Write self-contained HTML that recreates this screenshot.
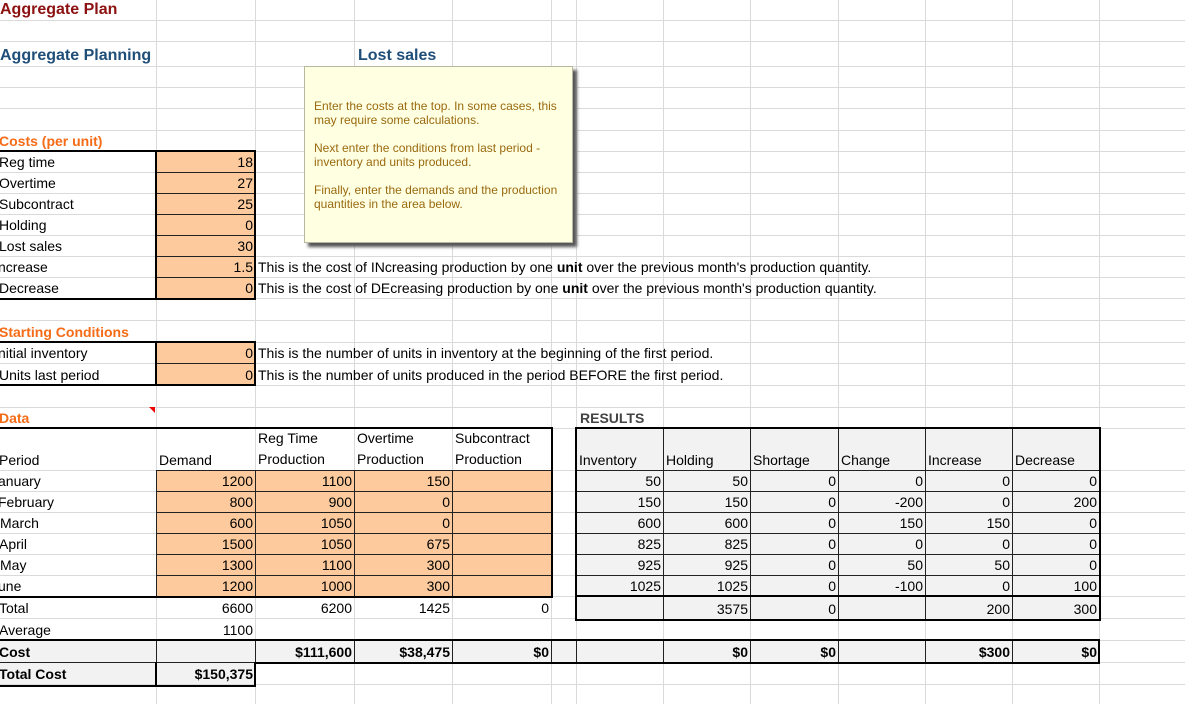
<!DOCTYPE html>
<html><head><meta charset="utf-8"><style>
*{margin:0;padding:0;box-sizing:border-box}
body{width:1185px;height:704px;overflow:hidden;background:#fff;position:relative;font-family:"Liberation Sans",Arial,sans-serif;font-size:14px;color:#000}
.v{position:absolute;top:0;width:1px;height:704px;background:#dadada}
.h{position:absolute;left:0;height:1px;width:1185px;background:#dadada}
.c{position:absolute;display:flex;align-items:flex-end;padding:0 2px 2px 2px;white-space:nowrap;line-height:16px}
.r{justify-content:flex-end}
.o{background:#fcca9c;border-top:1px solid #222;border-left:1px solid #222}
.g{background:#f2f2f2;border-top:1px solid #222;border-left:1px solid #222}
.b{font-weight:bold}
.box{position:absolute;border:2px solid #000}
.t{color:#444}
</style></head><body>
<div class="v" style="left:156px"></div><div class="v" style="left:255px"></div><div class="v" style="left:354px"></div><div class="v" style="left:452px"></div><div class="v" style="left:551px"></div><div class="v" style="left:576px"></div><div class="v" style="left:663px"></div><div class="v" style="left:750px"></div><div class="v" style="left:838px"></div><div class="v" style="left:925px"></div><div class="v" style="left:1012px"></div><div class="v" style="left:1099px"></div>
<div class="h" style="top:20px"></div><div class="h" style="top:41px"></div><div class="h" style="top:66px"></div><div class="h" style="top:87px"></div><div class="h" style="top:108px"></div><div class="h" style="top:130px"></div><div class="h" style="top:151px"></div><div class="h" style="top:172px"></div><div class="h" style="top:193px"></div><div class="h" style="top:214px"></div><div class="h" style="top:235px"></div><div class="h" style="top:256px"></div><div class="h" style="top:277px"></div><div class="h" style="top:298px"></div><div class="h" style="top:320px"></div><div class="h" style="top:342px"></div><div class="h" style="top:363px"></div><div class="h" style="top:385px"></div><div class="h" style="top:407px"></div><div class="h" style="top:428px"></div><div class="h" style="top:470px"></div><div class="h" style="top:491px"></div><div class="h" style="top:512px"></div><div class="h" style="top:533px"></div><div class="h" style="top:554px"></div><div class="h" style="top:575px"></div><div class="h" style="top:596px"></div><div class="h" style="top:618px"></div><div class="h" style="top:640px"></div><div class="h" style="top:662px"></div><div class="h" style="top:684px"></div>

<div class="c b" style="left:-2px;top:0;height:20px;font-size:16px;color:#8c1111">Aggregate Plan</div>
<div class="c b" style="left:-2px;top:41px;height:25px;font-size:16px;color:#1f4e79">Aggregate Planning</div>
<div class="c b" style="left:356px;top:41px;height:25px;font-size:16px;color:#1f4e79">Lost sales</div>

<div class="c b" style="left:-3px;top:130px;height:21px;color:#f56b16">Costs (per unit)</div>
<div class="c" style="left:-3px;top:151px;height:21px">Reg time</div>
<div class="c" style="left:-3px;top:172px;height:21px">Overtime</div>
<div class="c" style="left:-3px;top:193px;height:21px">Subcontract</div>
<div class="c" style="left:-3px;top:214px;height:21px">Holding</div>
<div class="c" style="left:-3px;top:235px;height:21px">Lost sales</div>
<div class="c" style="left:-4px;top:256px;height:21px">ncrease</div>
<div class="c" style="left:-3px;top:277px;height:21px">Decrease</div>
<div class="c r o" style="left:156px;top:151px;width:99px;height:21px">18</div>
<div class="c r o" style="left:156px;top:172px;width:99px;height:21px">27</div>
<div class="c r o" style="left:156px;top:193px;width:99px;height:21px">25</div>
<div class="c r o" style="left:156px;top:214px;width:99px;height:21px">0</div>
<div class="c r o" style="left:156px;top:235px;width:99px;height:21px">30</div>
<div class="c r o" style="left:156px;top:256px;width:99px;height:21px">1.5</div>
<div class="c r o" style="left:156px;top:277px;width:99px;height:21px">0</div>
<div class="box" style="left:-2px;top:150px;width:258px;height:150px"></div>
<div style="position:absolute;left:155px;top:150px;width:2px;height:149px;background:#000"></div>
<div class="c" style="left:256px;top:256px;height:21px">This is the cost of INcreasing production by one&nbsp;<b>unit</b>&nbsp;over the previous month's production quantity.</div>
<div class="c" style="left:256px;top:277px;height:21px">This is the cost of DEcreasing production by one&nbsp;<b>unit</b>&nbsp;over the previous month's production quantity.</div>

<div class="c b" style="left:-3px;top:320px;height:22px;color:#f56b16">Starting Conditions</div>
<div class="c" style="left:-4px;top:342px;height:21px">nitial inventory</div>
<div class="c" style="left:-3px;top:363px;height:22px">Units last period</div>
<div class="c r o" style="left:156px;top:342px;width:99px;height:21px">0</div>
<div class="c r o" style="left:156px;top:363px;width:99px;height:22px">0</div>
<div class="box" style="left:-2px;top:341px;width:258px;height:45px"></div>
<div style="position:absolute;left:155px;top:341px;width:2px;height:44px;background:#000"></div>
<div class="c" style="left:256px;top:342px;height:21px">This is the number of units in inventory at the beginning of the first period.</div>
<div class="c" style="left:256px;top:363px;height:22px">This is the number of units produced in the period BEFORE the first period.</div>

<div class="c b" style="left:-3px;top:407px;height:21px;color:#f56b16">Data</div>
<div style="position:absolute;left:149px;top:407px;width:0;height:0;border-top:6px solid #e00;border-left:6px solid transparent"></div>
<div class="c b t" style="left:578px;top:407px;height:21px">RESULTS</div>

<div class="c" style="left:-3px;top:449px;height:21px">Period</div>
<div class="c" style="left:157px;top:449px;height:21px">Demand</div>
<div class="c" style="left:256px;top:428px;height:42px;white-space:normal;width:95px;line-height:21px;padding-bottom:0">Reg Time Production</div>
<div class="c" style="left:355px;top:428px;height:42px;white-space:normal;width:95px;line-height:21px;padding-bottom:0">Overtime Production</div>
<div class="c" style="left:453px;top:428px;height:42px;white-space:normal;width:98px;line-height:21px;padding-bottom:0">Subcontract Production</div>

<div class="c" style="left:-4px;top:470px;height:21px">anuary</div>
<div class="c" style="left:-4px;top:491px;height:21px">February</div>
<div class="c" style="left:-2px;top:512px;height:21px">March</div>
<div class="c" style="left:-3px;top:533px;height:21px">April</div>
<div class="c" style="left:-2px;top:554px;height:21px">May</div>
<div class="c" style="left:-4px;top:575px;height:21px">une</div>
<div class="c" style="left:-3px;top:596px;height:22px">Total</div>
<div class="c" style="left:-3px;top:618px;height:22px">Average</div>

<div class="c r o" style="left:156px;top:470px;width:99px;height:21px">1200</div><div class="c r o" style="left:255px;top:470px;width:99px;height:21px">1100</div><div class="c r o" style="left:354px;top:470px;width:98px;height:21px">150</div><div class="c r o" style="left:452px;top:470px;width:99px;height:21px"></div>
<div class="c r o" style="left:156px;top:491px;width:99px;height:21px">800</div><div class="c r o" style="left:255px;top:491px;width:99px;height:21px">900</div><div class="c r o" style="left:354px;top:491px;width:98px;height:21px">0</div><div class="c r o" style="left:452px;top:491px;width:99px;height:21px"></div>
<div class="c r o" style="left:156px;top:512px;width:99px;height:21px">600</div><div class="c r o" style="left:255px;top:512px;width:99px;height:21px">1050</div><div class="c r o" style="left:354px;top:512px;width:98px;height:21px">0</div><div class="c r o" style="left:452px;top:512px;width:99px;height:21px"></div>
<div class="c r o" style="left:156px;top:533px;width:99px;height:21px">1500</div><div class="c r o" style="left:255px;top:533px;width:99px;height:21px">1050</div><div class="c r o" style="left:354px;top:533px;width:98px;height:21px">675</div><div class="c r o" style="left:452px;top:533px;width:99px;height:21px"></div>
<div class="c r o" style="left:156px;top:554px;width:99px;height:21px">1300</div><div class="c r o" style="left:255px;top:554px;width:99px;height:21px">1100</div><div class="c r o" style="left:354px;top:554px;width:98px;height:21px">300</div><div class="c r o" style="left:452px;top:554px;width:99px;height:21px"></div>
<div class="c r o" style="left:156px;top:575px;width:99px;height:21px">1200</div><div class="c r o" style="left:255px;top:575px;width:99px;height:21px">1000</div><div class="c r o" style="left:354px;top:575px;width:98px;height:21px">300</div><div class="c r o" style="left:452px;top:575px;width:99px;height:21px"></div>
<div class="box" style="left:-2px;top:427px;width:555px;height:171px"></div>

<div class="c r" style="left:156px;top:596px;width:99px;height:22px">6600</div>
<div class="c r" style="left:255px;top:596px;width:99px;height:22px">6200</div>
<div class="c r" style="left:354px;top:596px;width:98px;height:22px">1425</div>
<div class="c r" style="left:452px;top:596px;width:99px;height:22px">0</div>
<div class="c r" style="left:156px;top:618px;width:99px;height:22px">1100</div>

<div class="c g" style="left:576px;top:428px;width:87px;height:42px">Inventory</div><div class="c g" style="left:663px;top:428px;width:87px;height:42px">Holding</div><div class="c g" style="left:750px;top:428px;width:88px;height:42px">Shortage</div><div class="c g" style="left:838px;top:428px;width:87px;height:42px">Change</div><div class="c g" style="left:925px;top:428px;width:87px;height:42px">Increase</div><div class="c g" style="left:1012px;top:428px;width:87px;height:42px">Decrease</div>

<div class="c r g" style="left:576px;top:470px;width:87px;height:21px">50</div><div class="c r g" style="left:663px;top:470px;width:87px;height:21px">50</div><div class="c r g" style="left:750px;top:470px;width:88px;height:21px">0</div><div class="c r g" style="left:838px;top:470px;width:87px;height:21px">0</div><div class="c r g" style="left:925px;top:470px;width:87px;height:21px">0</div><div class="c r g" style="left:1012px;top:470px;width:87px;height:21px">0</div>
<div class="c r g" style="left:576px;top:491px;width:87px;height:21px">150</div><div class="c r g" style="left:663px;top:491px;width:87px;height:21px">150</div><div class="c r g" style="left:750px;top:491px;width:88px;height:21px">0</div><div class="c r g" style="left:838px;top:491px;width:87px;height:21px">-200</div><div class="c r g" style="left:925px;top:491px;width:87px;height:21px">0</div><div class="c r g" style="left:1012px;top:491px;width:87px;height:21px">200</div>
<div class="c r g" style="left:576px;top:512px;width:87px;height:21px">600</div><div class="c r g" style="left:663px;top:512px;width:87px;height:21px">600</div><div class="c r g" style="left:750px;top:512px;width:88px;height:21px">0</div><div class="c r g" style="left:838px;top:512px;width:87px;height:21px">150</div><div class="c r g" style="left:925px;top:512px;width:87px;height:21px">150</div><div class="c r g" style="left:1012px;top:512px;width:87px;height:21px">0</div>
<div class="c r g" style="left:576px;top:533px;width:87px;height:21px">825</div><div class="c r g" style="left:663px;top:533px;width:87px;height:21px">825</div><div class="c r g" style="left:750px;top:533px;width:88px;height:21px">0</div><div class="c r g" style="left:838px;top:533px;width:87px;height:21px">0</div><div class="c r g" style="left:925px;top:533px;width:87px;height:21px">0</div><div class="c r g" style="left:1012px;top:533px;width:87px;height:21px">0</div>
<div class="c r g" style="left:576px;top:554px;width:87px;height:21px">925</div><div class="c r g" style="left:663px;top:554px;width:87px;height:21px">925</div><div class="c r g" style="left:750px;top:554px;width:88px;height:21px">0</div><div class="c r g" style="left:838px;top:554px;width:87px;height:21px">50</div><div class="c r g" style="left:925px;top:554px;width:87px;height:21px">50</div><div class="c r g" style="left:1012px;top:554px;width:87px;height:21px">0</div>
<div class="c r g" style="left:576px;top:575px;width:87px;height:21px">1025</div><div class="c r g" style="left:663px;top:575px;width:87px;height:21px">1025</div><div class="c r g" style="left:750px;top:575px;width:88px;height:21px">0</div><div class="c r g" style="left:838px;top:575px;width:87px;height:21px">-100</div><div class="c r g" style="left:925px;top:575px;width:87px;height:21px">0</div><div class="c r g" style="left:1012px;top:575px;width:87px;height:21px">100</div>
<div class="c r g" style="left:576px;top:596px;width:87px;height:23px"></div><div class="c r g" style="left:663px;top:596px;width:87px;height:23px">3575</div><div class="c r g" style="left:750px;top:596px;width:88px;height:23px">0</div><div class="c r g" style="left:838px;top:596px;width:87px;height:23px"></div><div class="c r g" style="left:925px;top:596px;width:87px;height:23px">200</div><div class="c r g" style="left:1012px;top:596px;width:87px;height:23px">300</div>
<div style="position:absolute;left:576px;top:595px;width:524px;height:2px;background:#000"></div>
<div class="box" style="left:575px;top:427px;width:526px;height:194px"></div>

<div class="c b g" style="left:-3px;top:640px;width:159px;height:22px;border-left:none">Cost</div>
<div class="c r b g" style="left:156px;top:640px;width:99px;height:22px"></div>
<div class="c r b g" style="left:255px;top:640px;width:99px;height:22px">$111,600</div>
<div class="c r b g" style="left:354px;top:640px;width:98px;height:22px">$38,475</div>
<div class="c r b g" style="left:452px;top:640px;width:99px;height:22px">$0</div>
<div class="c r b g" style="left:551px;top:640px;width:25px;height:22px"></div>
<div class="c r b g" style="left:576px;top:640px;width:87px;height:22px"></div>
<div class="c r b g" style="left:663px;top:640px;width:87px;height:22px">$0</div>
<div class="c r b g" style="left:750px;top:640px;width:88px;height:22px">$0</div>
<div class="c r b g" style="left:838px;top:640px;width:87px;height:22px"></div>
<div class="c r b g" style="left:925px;top:640px;width:87px;height:22px">$300</div>
<div class="c r b g" style="left:1012px;top:640px;width:87px;height:22px">$0</div>
<div class="box" style="left:-2px;top:639px;width:1102px;height:25px"></div>

<div class="c b g" style="left:-3px;top:662px;width:159px;height:22px;border-left:none">Total Cost</div>
<div class="c r b g" style="left:156px;top:662px;width:99px;height:22px">$150,375</div>
<div class="box" style="left:-2px;top:662px;width:258px;height:25px;border-top:none"></div>
<div style="position:absolute;left:155px;top:662px;width:2px;height:23px;background:#000"></div>

<div style="position:absolute;left:304px;top:66px;width:269px;height:177px;background:#ffffe1;border:1px solid #b8b8a0;box-shadow:4px 4px 3px #555;font-size:12px;line-height:14px;color:#9a6a10;padding:32px 0 0 9px">
Enter the costs at the top. In some cases, this<br>may require some calculations.<br><br>Next enter the conditions from last period -<br>inventory and units produced.<br><br>Finally, enter the demands and the production<br>quantities in the area below.
</div>
</body></html>
